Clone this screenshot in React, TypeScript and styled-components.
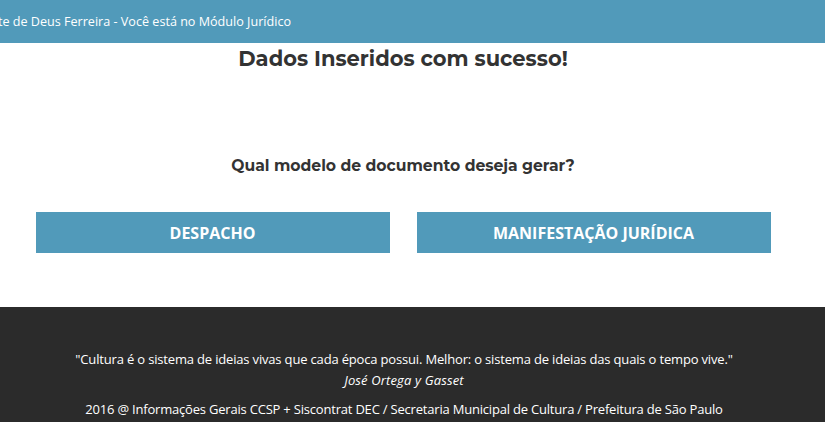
import React from "react";
import styled, { createGlobalStyle } from "styled-components";

const Global = createGlobalStyle`
  html, body { margin: 0; padding: 0; background: #fff; }
  body { font-family: "Open Sans", sans-serif; overflow: hidden; }
`;

const Page = styled.div`
  width: 825px;
  height: 422px;
  display: flex;
  flex-direction: column;
`;

const Header = styled.header`
  height: 43px;
  background: #519aba;
  display: flex;
  align-items: center;
  overflow: hidden;
`;

const HeaderClip = styled.div`
  width: 291px;
  flex: none;
  display: flex;
  justify-content: flex-end;
  overflow: hidden;
`;

const HeaderText = styled.span`
  flex: none;
  white-space: nowrap;
  color: #fff;
  font-size: 12.6px;
  font-family: "Open Sans", sans-serif;
`;

const Main = styled.main`
  width: 806px;
  height: 264px;
  display: flex;
  flex-direction: column;
  align-items: center;
`;

const Title = styled.h1`
  margin: 2px 0 0;
  font-family: "Montserrat", "Lato", sans-serif;
  font-weight: 700;
  font-size: 21px;
  color: #333;
  line-height: 28px;
`;

const Question = styled.h2`
  margin: 82px 0 0;
  font-family: "Montserrat", "Lato", sans-serif;
  font-weight: 700;
  font-size: 15.6px;
  color: #333;
  line-height: 22px;
`;

const Buttons = styled.div`
  margin-top: 35px;
  display: flex;
  gap: 27px;
`;

const Btn = styled.button`
  width: 354px;
  height: 41px;
  border: none;
  background: #519aba;
  color: #fff;
  font-family: "Open Sans", sans-serif;
  font-weight: 700;
  font-size: 16px;
  text-transform: uppercase;
  cursor: pointer;
`;

const Footer = styled.footer`
  flex: 1;
  background: #2b2b2b;
  color: #fff;
  font-family: "Open Sans", sans-serif;
  font-size: 13px;
  padding-top: 42px;
`;

const FooterInner = styled.div`
  width: 808px;
  display: flex;
  flex-direction: column;
  align-items: center;
`;

const Quote = styled.p`
  margin: 0;
  line-height: 20px;
  letter-spacing: -0.17px;
`;

const Author = styled.p`
  margin: 1px 0 0;
  font-style: italic;
  line-height: 20px;
  letter-spacing: 0.15px;
`;

const Copy = styled.p`
  margin: 9px 0 0;
  line-height: 20px;
  letter-spacing: -0.2px;
`;

export default function App() {
  return (
    <Page>
      <Global />
      <Header>
        <HeaderClip>
          <HeaderText>Bem-vindo(a), Vicente de Deus Ferreira - Você está no Módulo Jurídico</HeaderText>
        </HeaderClip>
      </Header>
      <Main>
        <Title>Dados Inseridos com sucesso!</Title>
        <Question>Qual modelo de documento deseja gerar?</Question>
        <Buttons>
          <Btn>Despacho</Btn>
          <Btn>Manifestação Jurídica</Btn>
        </Buttons>
      </Main>
      <Footer>
        <FooterInner>
          <Quote>"Cultura é o sistema de ideias vivas que cada época possui. Melhor: o sistema de ideias das quais o tempo vive."</Quote>
          <Author>José Ortega y Gasset</Author>
          <Copy>2016 @ Informações Gerais CCSP + Siscontrat DEC / Secretaria Municipal de Cultura / Prefeitura de São Paulo</Copy>
        </FooterInner>
      </Footer>
    </Page>
  );
}
